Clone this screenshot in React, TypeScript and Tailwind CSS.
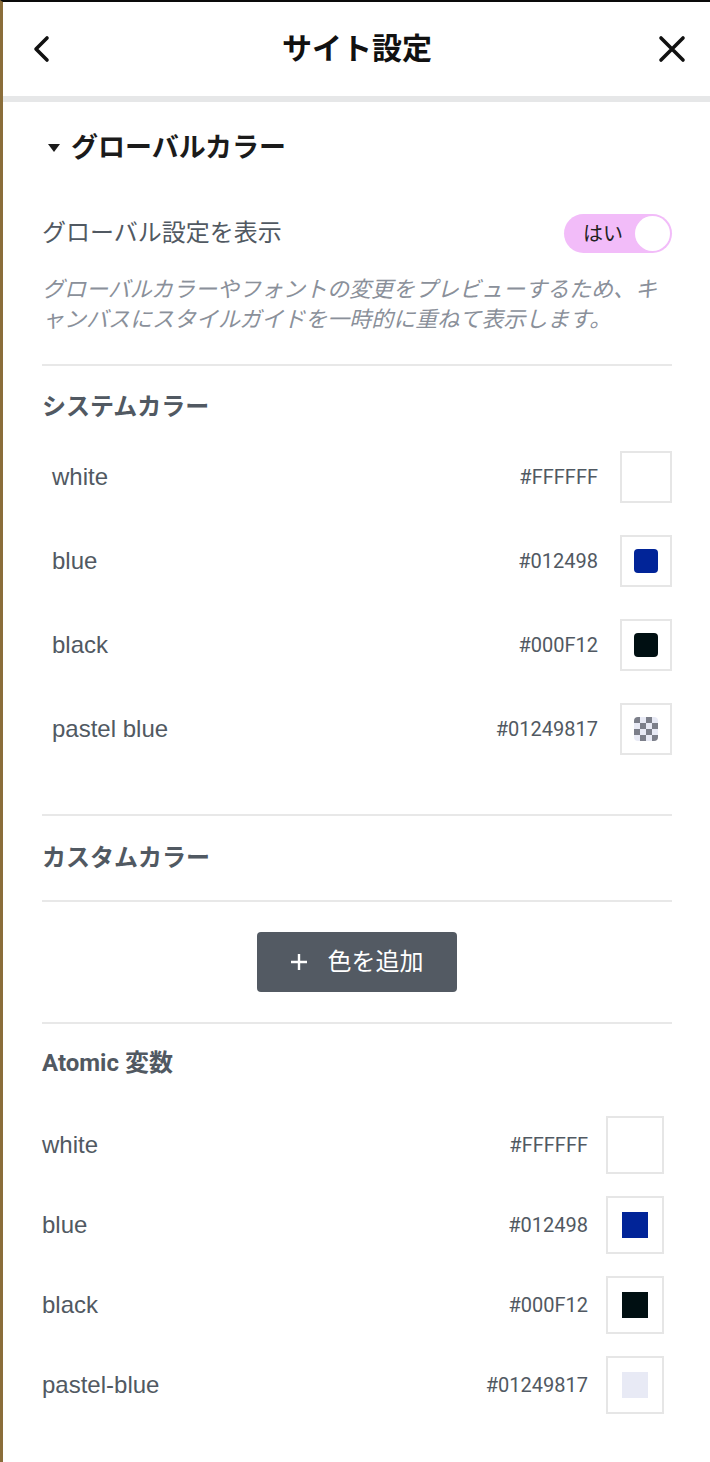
const systemColors = [
  { name: 'white', hex: '#FFFFFF', color: '#ffffff' },
  { name: 'blue', hex: '#012498', color: '#012498' },
  { name: 'black', hex: '#000F12', color: '#000f12' },
  { name: 'pastel blue', hex: '#01249817', color: 'checker' },
];

const atomicColors = [
  { name: 'white', hex: '#FFFFFF', color: '#ffffff' },
  { name: 'blue', hex: '#012498', color: '#012498' },
  { name: 'black', hex: '#000F12', color: '#000f12' },
  { name: 'pastel-blue', hex: '#01249817', color: '#e8eaf5' },
];

const Checker = () => (
  <div className="grid grid-cols-4 grid-rows-4 w-6 h-6 rounded overflow-hidden">
    {Array.from({ length: 16 }).map((_, i) => {
      const dark = (Math.floor(i / 4) + (i % 4)) % 2 === 0;
      return <div key={i} style={{ backgroundColor: dark ? '#7c7f8a' : '#e8eaf5' }} />;
    })}
  </div>
);

const Divider = () => <div className="h-[2px] bg-[#e8e8e8]" />;

const nameFont = { fontFamily: '"Liberation Sans", Arial, sans-serif' };
const hexFont = { fontFamily: 'Roboto, sans-serif' };

const App = () => {
  return (
    <div
      className="min-h-[1462px] bg-white border-t-2 border-t-[#0a0a0a] border-l-[3px] border-l-[#8a6d3a] text-[#515962]"
      style={{ fontFamily: 'Roboto, "Noto Sans CJK JP", sans-serif' }}
    >
      <header className="h-[94px] flex items-center justify-between px-[30px] text-[#111]">
        <svg width="24" height="30" viewBox="0 0 24 30" fill="none" stroke="currentColor" strokeWidth="3.6" strokeLinecap="round" strokeLinejoin="round">
          <path d="M14 4 L3 15 L14 26" />
        </svg>
        <h1 className="text-[30px] font-bold leading-[40px]">サイト設定</h1>
        <svg width="30" height="30" viewBox="0 0 30 30" fill="none" stroke="currentColor" strokeWidth="3.6" strokeLinecap="round" className="mr-[-7px]">
          <path d="M4 4 L26 26 M26 4 L4 26" />
        </svg>
      </header>
      <div className="h-[6px] bg-[#e6e7e8]" />

      <div className="pl-[39px] pr-[38px]">
        <div className="flex items-center gap-[10px] mt-[28px] h-[36px] text-[#1b1b1b]">
          <svg width="14" height="10" viewBox="0 0 14 10" className="ml-[5px]">
            <path d="M1 1 H13 L7 9 Z" fill="currentColor" />
          </svg>
          <span className="text-[27px] font-bold leading-[36px]">グローバルカラー</span>
        </div>

        <div className="flex items-center justify-between mt-[48px] h-[39px]">
          <span className="text-[24px] leading-[39px]">グローバル設定を表示</span>
          <div className="w-[108px] h-[39px] rounded-full bg-[#f2bcf9] flex items-center justify-between pl-[19px] pr-[2px]">
            <span className="text-[20px] leading-[28px] text-[#222]">はい</span>
            <span className="w-[35px] h-[35px] rounded-full bg-white" />
          </div>
        </div>

        <p className="italic text-[22px] leading-[30px] text-[#8a909a] mt-[22px]">
          グローバルカラーやフォントの変更をプレビューするため、キャンバスにスタイルガイドを一時的に重ねて表示します。
        </p>

        <div className="mt-[29px]">
          <Divider />
        </div>

        <h2 className="text-[24px] font-bold mt-[26px] leading-[30px]">システムカラー</h2>

        <div className="mt-[29px] flex flex-col gap-[32px]">
          {systemColors.map((c) => (
            <div key={c.name} className="flex items-center pl-[10px] h-[52px]">
              <span className="text-[24px] flex-1" style={nameFont}>{c.name}</span>
              <span className="text-[20px] mr-[22px]" style={hexFont}>{c.hex}</span>
              <div className="w-[52px] h-[52px] border-2 border-[#e6e6e6] flex items-center justify-center">
                {c.color === 'checker' ? (
                  <Checker />
                ) : (
                  <div className="w-6 h-6 rounded" style={{ backgroundColor: c.color }} />
                )}
              </div>
            </div>
          ))}
        </div>

        <div className="mt-[59px]">
          <Divider />
        </div>
        <h2 className="text-[24px] font-bold leading-[84px]">カスタムカラー</h2>
        <Divider />

        <div className="flex justify-center pt-[30px] pb-[30px]">
          <button className="w-[200px] h-[60px] rounded bg-[#535a63] text-white text-[24px] flex items-center justify-center gap-[21px]">
            <svg width="16" height="16" viewBox="0 0 16 16" stroke="currentColor" strokeWidth="2.4">
              <path d="M8 0 V16 M0 8 H16" />
            </svg>
            <span className="leading-[32px]">色を追加</span>
          </button>
        </div>
        <Divider />

        <h2 className="text-[24px] font-bold mt-[24px] leading-[30px]">Atomic 変数</h2>

        <div className="mt-[38px] flex flex-col gap-[22px]">
          {atomicColors.map((c) => (
            <div key={c.name} className="flex items-center h-[58px]">
              <span className="text-[24px] flex-1" style={nameFont}>{c.name}</span>
              <span className="text-[20px] mr-[18px]" style={hexFont}>{c.hex}</span>
              <div className="w-[58px] h-[58px] border-2 border-[#e6e6e6] flex items-center justify-center mr-[8px]">
                <div className="w-[26px] h-[26px]" style={{ backgroundColor: c.color }} />
              </div>
            </div>
          ))}
        </div>
      </div>
    </div>
  );
};

export default App;
